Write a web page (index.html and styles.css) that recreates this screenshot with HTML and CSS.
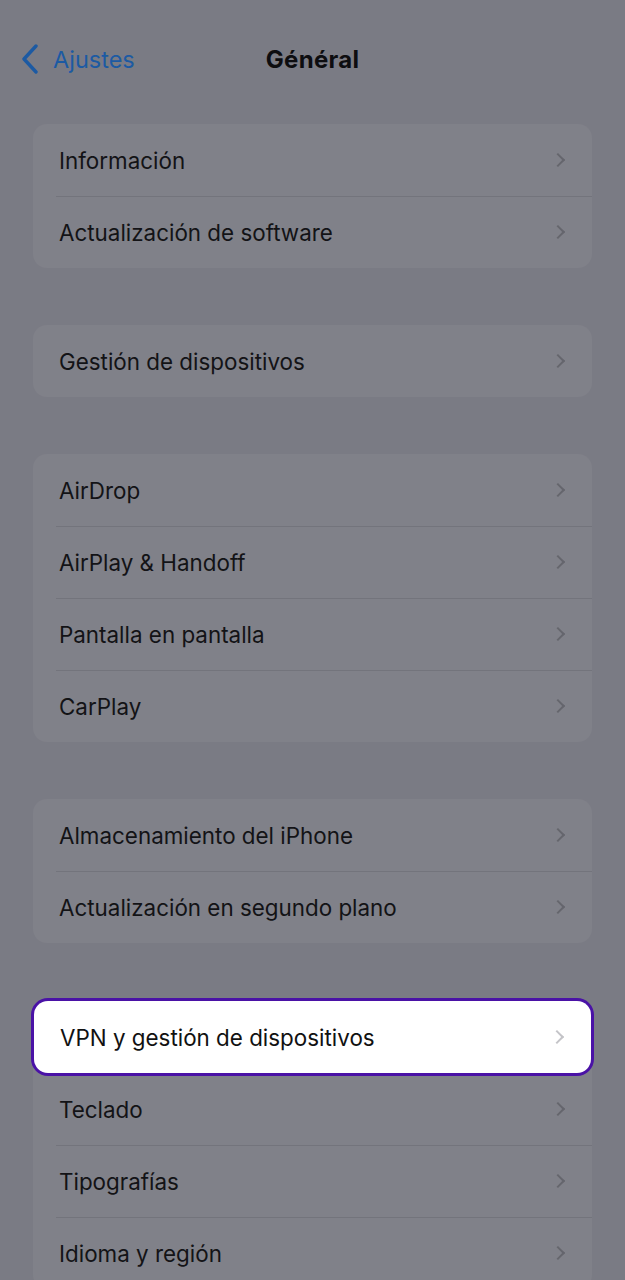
FILE: index.html
```html
<!DOCTYPE html>
<html lang="es">
<head>
    <meta charset="UTF-8">
    <meta name="viewport" content="width=device-width, initial-scale=1.0">
    <title>General</title>
    <link rel="stylesheet" href="styles.css">
</head>
<body>
    <div class="screen">
        <header class="nav">
            <a class="back" href="#">
                <svg class="back-icon" width="20" height="30" viewBox="0 0 20 30">
                    <path d="M16 2 L4 15 L16 28" fill="none" stroke="currentColor" stroke-width="3.4" stroke-linecap="round" stroke-linejoin="round"/>
                </svg>
                <span>Ajustes</span>
            </a>
            <h1 class="title">Général</h1>
        </header>

        <div class="group">
            <div class="row"><span>Información</span><i class="chev"></i></div>
            <div class="row"><span>Actualización de software</span><i class="chev"></i></div>
        </div>

        <div class="group">
            <div class="row"><span>Gestión de dispositivos</span><i class="chev"></i></div>
        </div>

        <div class="group">
            <div class="row"><span>AirDrop</span><i class="chev"></i></div>
            <div class="row"><span>AirPlay &amp; Handoff</span><i class="chev"></i></div>
            <div class="row"><span>Pantalla en pantalla</span><i class="chev"></i></div>
            <div class="row"><span>CarPlay</span><i class="chev"></i></div>
        </div>

        <div class="group">
            <div class="row"><span>Almacenamiento del iPhone</span><i class="chev"></i></div>
            <div class="row"><span>Actualización en segundo plano</span><i class="chev"></i></div>
        </div>

        <div class="group group-last">
            <div class="row highlight"><span>VPN y gestión de dispositivos</span><i class="chev"></i></div>
            <div class="row"><span>Teclado</span><i class="chev"></i></div>
            <div class="row"><span>Tipografías</span><i class="chev"></i></div>
            <div class="row"><span>Idioma y región</span><i class="chev"></i></div>
        </div>
    </div>
</body>
</html>
```

FILE: styles.css
```css
html, body {
    margin: 0;
    padding: 0;
    height: 100%;
    overflow: hidden;
}
body {
    background: #7a7b84;
    font-family: Inter, "Noto Sans", sans-serif;
    color: #131316;
}
.screen {
    padding: 0 33px;
}
.nav {
    position: relative;
    height: 124px;
    display: flex;
    align-items: flex-start;
}
.back {
    display: flex;
    align-items: center;
    gap: 13px;
    margin-top: 44px;
    margin-left: -13px;
    color: #1c5aa3;
    text-decoration: none;
    font-size: 23.5px;
}
.back-icon {
    display: block;
}
.title {
    position: absolute;
    left: 0;
    right: 0;
    top: 44px;
    margin: 0;
    text-align: center;
    font-size: 24px;
    font-weight: 700;
    line-height: 32px;
    letter-spacing: 0.3px;
    color: #0d0d10;
}
.group {
    background: #808189;
    border-radius: 14px;
    margin-bottom: 57px;
}
.group-last {
    margin-top: 58px;
}
.row {
    position: relative;
    height: 72px;
    display: flex;
    align-items: center;
    justify-content: space-between;
    padding: 0 29px 0 26px;
    font-size: 22.4px;
}
.row + .row::before {
    content: "";
    position: absolute;
    top: 0;
    left: 23px;
    right: 0;
    border-top: 1px solid #73747c;
}
.chev {
    width: 8px;
    height: 8px;
    border-right: 2.2px solid #65666d;
    border-top: 2.2px solid #65666d;
    transform: rotate(45deg);
}
.highlight {
    background: #fff;
    border-radius: 14px;
    box-shadow: 0 0 0 3px #4a12a6;
    margin: 0 1px;
    color: #111;
}
.highlight .chev {
    border-color: #c4c4c8;
}
.highlight + .row::before {
    display: none;
}
```
